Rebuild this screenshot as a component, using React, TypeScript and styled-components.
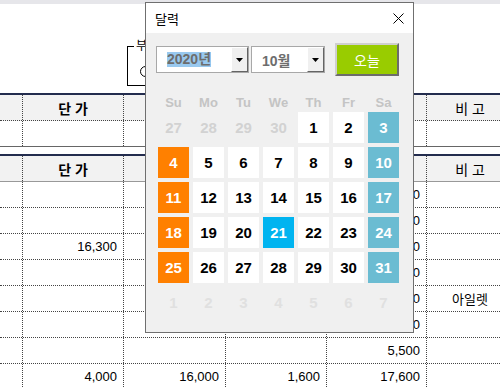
import styled, { createGlobalStyle } from 'styled-components'

const GlobalStyle = createGlobalStyle`
  html, body {
    margin: 0;
    padding: 0;
    background: #fff;
    overflow: hidden;
  }
  body {
    font-family: 'Liberation Sans', 'Noto Sans CJK KR', sans-serif;
  }
`

const Page = styled.div`
  position: relative;
  width: 500px;
  height: 388px;
  overflow: hidden;
  background: #fff;
`

const TopStrip = styled.div`
  height: 4px;
  background: #e6e6ea;
`

const FormArea = styled.div`
  height: 89px;
  box-sizing: border-box;
  padding: 42px 0 0 127px;
`

const GroupBox = styled.div`
  position: relative;
  width: 120px;
  height: 40px;
  box-sizing: border-box;
  border: 1px solid #000;
`

const GroupCaption = styled.span`
  position: absolute;
  top: -8px;
  left: 6px;
  padding: 0 2px;
  background: #fff;
  font-size: 12px;
  line-height: 14px;
`

const Radio = styled.span`
  display: block;
  width: 11px;
  height: 11px;
  margin: 19px 0 0 12px;
  box-sizing: border-box;
  border: 1px solid #000;
  border-radius: 50%;
`

const Table = styled.div`
  border-top: 2px solid #232c4e;
`

const Spacer = styled.div`
  height: 7px;
`

const lines = {
  dotted: '1px dotted #444',
  dark: '1px solid #666',
  gray: '1px solid #999',
}

const Row = styled.div<{ $head?: boolean; $line?: keyof typeof lines }>`
  display: grid;
  grid-template-columns: 23px 101px 102px 101px 100px 87px;
  height: 26px;
  box-sizing: border-box;
  background: ${(p) => (p.$head ? '#f2f2f2' : '#fff')};
  border-bottom: ${(p) => lines[p.$line || 'dotted']};
`

const Cell = styled.div<{ $head?: boolean }>`
  display: flex;
  align-items: center;
  justify-content: ${(p) => (p.$head ? 'center' : 'flex-end')};
  padding: 0 6px;
  box-sizing: border-box;
  border-right: 1px dotted #444;
  font-size: ${(p) => (p.$head ? '14px' : '13px')};
  font-weight: ${(p) => (p.$head ? 'bold' : 'normal')};
  color: #000;
  white-space: nowrap;
`

const NoteCell = styled(Cell)`
  justify-content: center;
  font-weight: normal;
`

/* calendar dialog */
const Dialog = styled.div`
  position: absolute;
  left: 145px;
  top: 2px;
  width: 269px;
  height: 331px;
  box-sizing: border-box;
  border: 1px solid #6f6f6f;
  background: #f0f0f0;
  display: flex;
  flex-direction: column;
`

const TitleBar = styled.div`
  height: 30px;
  background: #fff;
  display: flex;
  align-items: center;
  justify-content: space-between;
  padding: 0 9px;
  font-size: 13px;
  color: #000;
`

const DialogBody = styled.div`
  padding: 10px 0 0 10px;
`

const Controls = styled.div`
  display: flex;
  align-items: center;
  height: 33px;
`

const Combo = styled.div<{ $w: number }>`
  width: ${(p) => p.$w}px;
  height: 27px;
  box-sizing: border-box;
  border: 1px solid #a8a8a8;
  background: #fff;
  display: flex;
  margin-right: 2px;
`

const ComboText = styled.div`
  flex: 1;
  display: flex;
  align-items: center;
  padding-left: 10px;
  font-size: 14px;
  font-weight: bold;
  color: #6d6d6d;
`

const Selected = styled.span`
  background: #99c9ef;
  line-height: 15px;
`

const DropButton = styled.div`
  width: 17px;
  box-sizing: border-box;
  border: 1px solid;
  border-color: #fff #646464 #646464 #fff;
  background: #f0f0f0;
  display: flex;
  align-items: center;
  justify-content: center;
`

const TodayButton = styled.div`
  width: 64px;
  height: 33px;
  margin-left: 8px;
  box-sizing: border-box;
  border: 2px solid;
  border-color: #cfcfcf #6c6c6c #6c6c6c #cfcfcf;
  background: #99cc00;
  color: #fff;
  font-size: 14px;
  display: flex;
  align-items: center;
  justify-content: center;
`

const WeekHeader = styled.div`
  margin: 16px 0 0 2px;
  display: grid;
  grid-template-columns: repeat(7, 31px);
  column-gap: 4px;
  height: 20px;
`

const WeekDay = styled.div`
  display: flex;
  align-items: center;
  justify-content: center;
  font-size: 13px;
  font-weight: bold;
  color: #c4c4c4;
`

const Calendar = styled.div`
  margin: 0 0 0 2px;
  display: grid;
  grid-template-columns: repeat(7, 31px);
  column-gap: 4px;
  row-gap: 4px;
  grid-auto-rows: 31px;
`

type Kind = 'prev' | 'next' | 'day' | 'sun' | 'sat' | 'today'

const dayBg: Record<Kind, string> = {
  prev: 'transparent',
  next: 'transparent',
  day: '#fff',
  sun: '#ff8000',
  sat: '#6bbcd2',
  today: '#00b4f0',
}

const dayFg: Record<Kind, string> = {
  prev: '#d2d2d2',
  next: '#e0e0e0',
  day: '#000',
  sun: '#fff',
  sat: '#fff',
  today: '#fff',
}

const Day = styled.div<{ $kind: Kind }>`
  display: flex;
  align-items: center;
  justify-content: center;
  background: ${(p) => dayBg[p.$kind]};
  color: ${(p) => dayFg[p.$kind]};
  font-size: 15px;
  font-weight: bold;
`

const weekDays = ['Su', 'Mo', 'Tu', 'We', 'Th', 'Fr', 'Sa']

function buildDays() {
  const days: { n: number; kind: Kind }[] = []
  ;[27, 28, 29, 30].forEach((n) => days.push({ n, kind: 'prev' }))
  for (let n = 1; n <= 31; n++) {
    const col = days.length % 7
    let kind: Kind = 'day'
    if (n === 21) kind = 'today'
    else if (col === 0) kind = 'sun'
    else if (col === 6) kind = 'sat'
    days.push({ n, kind })
  }
  for (let n = 1; n <= 7; n++) days.push({ n, kind: 'next' })
  return days
}

function CloseIcon() {
  return (
    <svg width="11" height="11" viewBox="0 0 11 11">
      <path d="M0.5 0.5 L10.5 10.5 M10.5 0.5 L0.5 10.5" stroke="#000" strokeWidth="1" />
    </svg>
  )
}

function Arrow() {
  return (
    <svg width="7" height="4" viewBox="0 0 7 4">
      <path d="M0 0 H7 L3.5 4 Z" fill="#000" />
    </svg>
  )
}

const bodyRows: string[][] = [
  ['', '', '', '', '13,200', ''],
  ['', '', '', '', '8,800', ''],
  ['', '16,300', '', '', '17,930', ''],
  ['', '', '', '', '6,600', ''],
  ['', '', '', '', '11,000', '아일렛'],
  ['', '', '', '', '2,200', ''],
  ['', '', '', '', '5,500', ''],
  ['', '4,000', '16,000', '1,600', '17,600', ''],
]

function HeadRow({ line }: { line: keyof typeof lines }) {
  return (
    <Row $head $line={line}>
      <Cell $head />
      <Cell $head>단 가</Cell>
      <Cell $head />
      <Cell $head />
      <Cell $head />
      <NoteCell $head>비 고</NoteCell>
    </Row>
  )
}

export default function App() {
  const days = buildDays()
  return (
    <Page>
      <GlobalStyle />
      <TopStrip />
      <FormArea>
        <GroupBox>
          <GroupCaption>부서</GroupCaption>
          <Radio />
        </GroupBox>
      </FormArea>

      <Table>
        <HeadRow line="dotted" />
        <Row $line="dark">
          <Cell />
          <Cell />
          <Cell />
          <Cell />
          <Cell />
          <Cell />
        </Row>
      </Table>
      <Spacer />
      <Table>
        <HeadRow line="gray" />
        {bodyRows.map((r, i) => (
          <Row key={i}>
            {r.map((v, j) =>
              j === 5 ? <NoteCell key={j}>{v}</NoteCell> : <Cell key={j}>{v}</Cell>,
            )}
          </Row>
        ))}
      </Table>

      <Dialog>
        <TitleBar>
          <span>달력</span>
          <CloseIcon />
        </TitleBar>
        <DialogBody>
          <Controls>
            <Combo $w={93}>
              <ComboText>
                <Selected>2020년</Selected>
              </ComboText>
              <DropButton>
                <Arrow />
              </DropButton>
            </Combo>
            <Combo $w={74}>
              <ComboText>10월</ComboText>
              <DropButton>
                <Arrow />
              </DropButton>
            </Combo>
            <TodayButton>오늘</TodayButton>
          </Controls>
          <WeekHeader>
            {weekDays.map((w) => (
              <WeekDay key={w}>{w}</WeekDay>
            ))}
          </WeekHeader>
          <Calendar>
            {days.map((d, i) => (
              <Day key={i} $kind={d.kind}>
                {d.n}
              </Day>
            ))}
          </Calendar>
        </DialogBody>
      </Dialog>
    </Page>
  )
}
